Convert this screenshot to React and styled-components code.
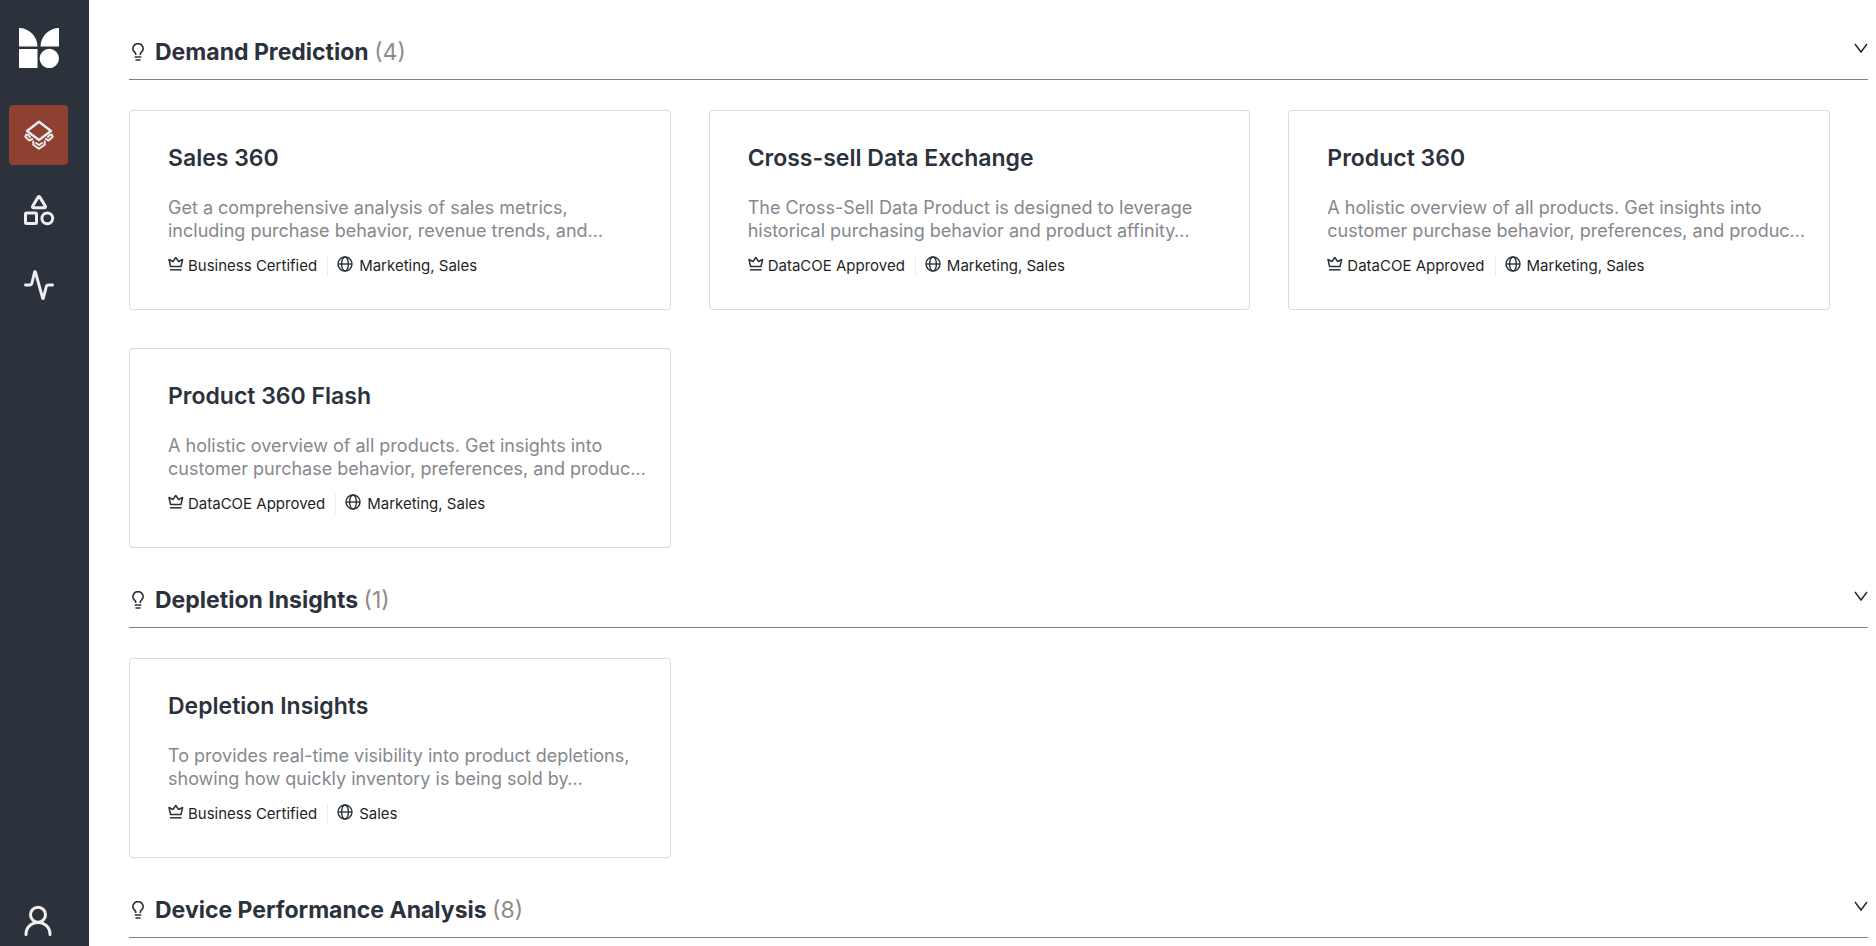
import React from "react";
import styled, { createGlobalStyle } from "styled-components";

const GlobalStyle = createGlobalStyle`
  * { box-sizing: border-box; }
  body { margin: 0; background: #fff; color: #2c323c; font-family: Inter, "Liberation Sans", sans-serif; }
  button { font: inherit; color: inherit; border: 0; background: none; padding: 0; cursor: pointer; }
  svg { display: block; flex: none; }
`;

const Page = styled.div`
  display: flex;
  height: 100vh;
  overflow: hidden;
`;

const Sidebar = styled.aside`
  flex: none;
  width: 89px;
  display: flex;
  flex-direction: column;
  background: #2c323c;
  color: #ebedf3;
`;

const Brand = styled.a`
  display: block;
  color: #fff;
  padding: 28px 0 0 19px;
  margin-bottom: 37px;
`;

const Nav = styled.nav`
  flex: 1;
  display: flex;
  flex-direction: column;
  gap: 15px;
  padding-left: 9px;
`;

const NavButton = styled.button`
  width: 59px;
  height: 60px;
  display: grid;
  place-items: center;
  border-radius: 4px;
  background: ${(p) => (p.$active ? "#8e4031" : "transparent")};
`;

const ProfileButton = styled(NavButton)`
  height: 50px;
  margin-left: 8px;
  color: #f2efec;
`;

const Main = styled.main`
  flex: 1;
  min-width: 0;
  overflow: hidden;
  padding: 38px 8px 0 40px;
`;

const SectionHeader = styled.header`
  display: flex;
  align-items: flex-start;
  height: 42px;
  border-bottom: 1px solid #808289;
`;

const SectionTitle = styled.h2`
  flex: 1;
  display: flex;
  align-items: center;
  gap: 8px;
  margin: 0;
  font-size: 23px;
  line-height: 28px;
  font-weight: 700;
`;

const Count = styled.span`
  font-weight: 400;
  color: #8c8c8c;
`;

const Toggle = styled.button`
  margin-top: 3px;
`;

const Cards = styled.div`
  display: grid;
  grid-template-columns: repeat(3, 1fr);
  padding-top: 30px;
`;

const Card = styled.article`
  min-height: 200px;
  margin: 0 38px 38px 0;
  padding: 31px 20px 32px 38px;
  border: 1px solid #d9d9d9;
  border-radius: 4px;
`;

const CardTitle = styled.h3`
  margin: 0 0 22px;
  font-size: 23px;
  line-height: 32px;
  font-weight: 600;
`;

const Description = styled.p`
  margin: 0 0 14px;
  font-size: 18px;
  line-height: 23px;
  white-space: pre-line;
  color: #85888e;
`;

const Meta = styled.div`
  display: flex;
  align-items: flex-start;
  font-size: 15px;
  line-height: 20px;
  color: #1f1f1f;
`;

const MetaItem = styled.span`
  display: flex;
  gap: ${(p) => p.$gap}px;
  svg { color: #2c323c; }
`;

const Divider = styled.i`
  width: 1px;
  height: 20px;
  margin: 0 9px 0 10px;
  background: #ebebeb;
`;

const Logo = () => (
  <svg width="40" height="40" viewBox="0 0 40 40" fill="currentColor" aria-hidden="true">
    <path d="M0 0a18.500 18.500 0 0 1 18.500 18.500H0zM40 0v18.500H21.500A18.500 18.500 0 0 1 40 0zM0 21h18.500v19H0z" />
    <circle cx="30.300" cy="30.500" r="9.700" />
  </svg>
);

const LayersIcon = () => (
  <svg width="32" height="32" viewBox="0 0 32 32" fill="none" stroke="currentColor" strokeWidth="2.400" strokeLinejoin="round" aria-hidden="true">
    <path d="M16 2.700 28 12 16 21 4 12z" />
    <path strokeWidth="2" strokeLinecap="round" d="M3.200 15.600 2.300 17.800 6.300 21.600 9.200 20M4.800 15.800 7 18M28.800 15.600 29.700 17.800 25.700 21.600 22.800 20M27.200 15.800 25 18M10.300 22.600v3.200L16 29.800 21.700 25.800V22.600M13 24 16 26 19 24" />
  </svg>
);

const ShapesIcon = () => (
  <svg width="32" height="32" viewBox="0 0 32 32" fill="none" stroke="currentColor" strokeWidth="3" strokeLinejoin="round" aria-hidden="true">
    <path d="M15.300 2.900 9.600 12.300a1 1 0 0 0 .9 1.500h11a1 1 0 0 0 .9-1.500L16.700 2.900a.9.9 0 0 0-1.400 0z" />
    <rect x="2.500" y="19" width="11" height="10.500" rx="1" />
    <circle cx="24.300" cy="24.300" r="5.400" />
  </svg>
);

const ActivityIcon = () => (
  <svg width="32" height="32" viewBox="0 0 32 32" fill="none" stroke="currentColor" strokeWidth="2.900" strokeLinecap="round" strokeLinejoin="round" aria-hidden="true">
    <path d="M2.500 16h4a2.500 2.500 0 0 0 2.400-1.900L11.600 3q.4-1.200.8 0l7.200 26q.4 1.200.8 0l2.800-11.100a2.500 2.500 0 0 1 2.400-1.900h4" />
  </svg>
);

const UserIcon = () => (
  <svg width="32" height="32" viewBox="0 0 32 32" fill="none" stroke="currentColor" strokeWidth="3" strokeLinecap="round" aria-hidden="true">
    <circle cx="16" cy="9.700" r="7.500" />
    <path d="M4 29.500C4 22.500 9 17.500 16 17.500S28 22.500 28 29.500" />
  </svg>
);

const BulbIcon = () => (
  <svg width="18" height="18" viewBox="0 0 18 18" fill="none" stroke="currentColor" strokeWidth="1.600" aria-hidden="true">
    <path d="M6.700 12V10.800C6.700 9.300 3.800 8.600 3.800 5.800a5.200 5.200 0 0 1 10.400 0c0 2.800-2.900 3.500-2.900 5V12M5.700 14h6.600M6.500 17h5" />
  </svg>
);

const CrownIcon = () => (
  <svg width="16" height="16" viewBox="0 0 16 16" fill="none" stroke="currentColor" strokeLinejoin="round" aria-hidden="true">
    <path strokeWidth="1.500" d="M2.600 10.500 1 3.500 5 5.500 7.800 1.500 10.600 5.500 14.600 3.500 13 10.500z" />
    <path strokeWidth="1.500" d="M2 13.800h11.600" />
  </svg>
);

const GlobeIcon = () => (
  <svg width="16" height="16" viewBox="0 0 16 16" fill="none" stroke="currentColor" strokeWidth="1.400" aria-hidden="true">
    <circle cx="8" cy="8" r="7" />
    <ellipse cx="8" cy="8" rx="3.400" ry="7" />
    <path d="M1 8h14" />
  </svg>
);

const ChevronIcon = () => (
  <svg width="14" height="14" viewBox="0 0 14 14" fill="none" stroke="#222" strokeWidth="1.400" aria-hidden="true">
    <path d="M1 3l6 8 6-8" />
  </svg>
);

const product360 =
  "A holistic overview of all products. Get insights into\ncustomer purchase behavior, preferences, and produc…";

const sections = [
  {
    title: "Demand Prediction",
    count: 4,
    cards: [
      { title: "Sales 360", text: "Get a comprehensive analysis of sales metrics,\nincluding purchase behavior, revenue trends, and…", badge: "Business Certified", domains: "Marketing, Sales" },
      { title: "Cross-sell Data Exchange", text: "The Cross-Sell Data Product is designed to leverage\nhistorical purchasing behavior and product affinity…", badge: "DataCOE Approved", domains: "Marketing, Sales" },
      { title: "Product 360", text: product360, badge: "DataCOE Approved", domains: "Marketing, Sales" },
      { title: "Product 360 Flash", text: product360, badge: "DataCOE Approved", domains: "Marketing, Sales" },
    ],
  },
  {
    title: "Depletion Insights",
    count: 1,
    cards: [
      { title: "Depletion Insights", text: "To provides real-time visibility into product depletions,\nshowing how quickly inventory is being sold by…", badge: "Business Certified", domains: "Sales" },
    ],
  },
  { title: "Device Performance Analysis", count: 8, cards: [] },
];

function ProductCard({ title, text, badge, domains }) {
  return (
    <Card>
      <CardTitle>{title}</CardTitle>
      <Description>{text}</Description>
      <Meta>
        <MetaItem $gap={4}><CrownIcon />{badge}</MetaItem>
        <Divider />
        <MetaItem $gap={6}><GlobeIcon />{domains}</MetaItem>
      </Meta>
    </Card>
  );
}

export default function App() {
  return (
    <>
      <GlobalStyle />
      <Page>
        <Sidebar>
          <Brand href="#" aria-label="Home"><Logo /></Brand>
          <Nav>
            <NavButton $active aria-label="Data products"><LayersIcon /></NavButton>
            <NavButton aria-label="Catalog"><ShapesIcon /></NavButton>
            <NavButton aria-label="Activity"><ActivityIcon /></NavButton>
          </Nav>
          <ProfileButton aria-label="Profile"><UserIcon /></ProfileButton>
        </Sidebar>
        <Main>
          {sections.map((s) => (
            <section key={s.title}>
              <SectionHeader>
                <SectionTitle><BulbIcon /><span>{s.title} <Count>({s.count})</Count></span></SectionTitle>
                <Toggle aria-label={`Collapse ${s.title}`}><ChevronIcon /></Toggle>
              </SectionHeader>
              <Cards>{s.cards.map((c) => <ProductCard key={c.title} {...c} />)}</Cards>
            </section>
          ))}
        </Main>
      </Page>
    </>
  );
}
